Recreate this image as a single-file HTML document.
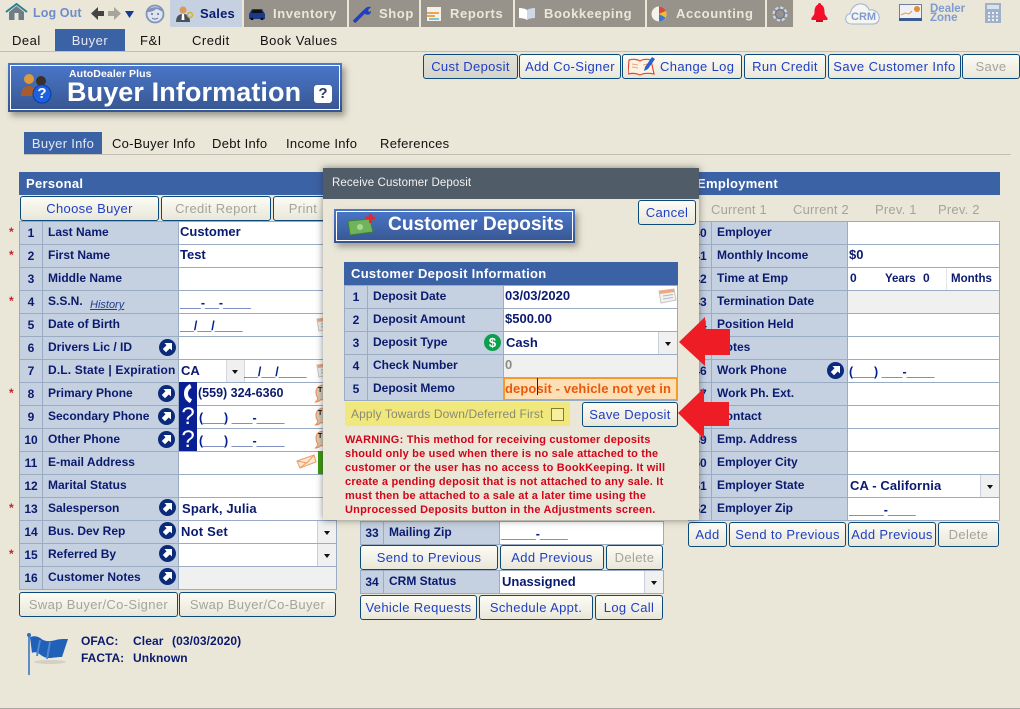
<!DOCTYPE html>
<html><head><meta charset="utf-8"><title>Buyer Information</title>
<style>
html,body{margin:0;padding:0}
body{width:1020px;height:709px;overflow:hidden;background:#eae7d8;position:relative;font-family:"Liberation Sans",sans-serif;color:#0a1a6e}
.a{position:absolute;white-space:nowrap}
.t{position:absolute;top:0;height:27px;background:#97938a;color:#ece8d9;font:bold 13px/27px "Liberation Sans",sans-serif;letter-spacing:.6px;white-space:nowrap}
.t span{position:absolute;top:0}
.s{position:absolute;top:29px;height:22px;font:13px/23px "Liberation Sans",sans-serif;letter-spacing:.5px;color:#111;white-space:nowrap}
.b{position:absolute;box-sizing:border-box;height:25px;border:1px solid #0c4a7c;border-radius:3px;background:linear-gradient(#fdfcf5,#e9e7d9);color:#1f3fc4;font:13px/23px "Liberation Sans",sans-serif;letter-spacing:.35px;text-align:center;white-space:nowrap;overflow:hidden}
.b.d{color:#a5a49b}
.p{position:absolute;box-sizing:border-box;border-left:1px solid #9aabc4;border-right:1px solid #9aabc4;border-bottom:1px solid #9aabc4}
.r{display:flex;height:23px;box-sizing:border-box;border-top:1px solid #9aabc4;background:#fff}
.n{width:23px;box-sizing:border-box;background:#c5d0e0;border-right:1px solid #9aabc4;font:bold 12px/22px "Liberation Sans",sans-serif;text-align:center;flex:none}
.l{width:136px;box-sizing:border-box;background:#c5d0e0;border-right:1px solid #9aabc4;font:bold 12px/20px "Liberation Sans",sans-serif;padding-left:5px;flex:none;white-space:nowrap;position:relative}
.v{flex:1;font:bold 13px/20px "Liberation Sans",sans-serif;padding-left:1px;white-space:nowrap;position:relative;overflow:hidden}
.v.g{background:#f0f0f0}
.m{color:#00228a;font:bold 12.5px/24px "Liberation Sans",sans-serif;padding-left:1px}
.dd{position:absolute;right:0;top:0;bottom:0;width:18px;background:#f0f0f0;border-left:1px solid #c9d0dc}
.dd:after{content:"";position:absolute;left:6px;top:10px;border:3px solid transparent;border-top:4px solid #111;border-bottom:0}
.h{position:absolute;background:#3c62a6;color:#fff;font:bold 13px/23px "Liberation Sans",sans-serif;letter-spacing:.3px;white-space:nowrap;overflow:hidden}
.ic{position:absolute;width:17px;height:17px}
.st{position:absolute;left:9px;color:#c8202a;font:bold 12px/12px "Liberation Sans",sans-serif}
.q{position:absolute;left:179px;width:18px;height:23px;background:#0a1f94;color:#fff;font:24px/24px "Liberation Sans",sans-serif;text-align:center;overflow:hidden}
.tk{position:absolute;left:314px;width:10px;height:20px}
.tl{position:absolute;left:318px;color:#111;font:bold 7px/8px "Liberation Sans",sans-serif}
.ct{position:absolute;top:202px;color:#a5a49b;font:13px/16px "Liberation Sans",sans-serif;letter-spacing:.2px}
</style></head><body>
<svg width="0" height="0" style="position:absolute"><defs>
<symbol id="go" viewBox="0 0 17 17"><circle cx="8.500" cy="8.500" r="8.500" fill="#0b2a7a"/><path d="M5.500 4h7.500v7.500l-2.200-2-3.800 3.700-3.200-3.200 3.700-3.800z" fill="#fff"/></symbol>
<symbol id="bub" viewBox="0 0 10 20"><path d="M10 1C5 1 2 4 2 8c0 3 1 5 2 6-.5 2-1.500 3-2.500 4 2 0 4-1 5.500-2.500 1 .3 2 .5 3 .5z" fill="#d8ccb8" stroke="#f08a50"/></symbol>
<symbol id="cal" viewBox="0 0 20 16"><path d="M2 3l15-2 2 11-15 3z" fill="#f4f2ee" stroke="#c9c5bd"/><path d="M2 3l15-2 .5 3L3 6z" fill="#eea87c"/><path d="M6 8l10-1.500M6 11l10-1.500" stroke="#a9b8d0"/></symbol>
</defs></svg>

<!-- top nav -->
<svg class="a" style="left:5px;top:3px" width="23" height="18" viewBox="0 0 23 18"><path d="M1 9L11.500 1 22 9" fill="none" stroke="#2d7f96" stroke-width="2"/><path d="M4 9l7.500-6L19 9v8H4z" fill="#6f7d86"/><rect x="9.500" y="10" width="4" height="7" fill="#e9e6d8"/></svg>
<div class="a" style="left:33px;top:5px;color:#6f8bc9;font:bold 12.5px/16px 'Liberation Sans',sans-serif;letter-spacing:.1px">Log Out</div>
<svg class="a" style="left:90px;top:6px" width="45" height="15" viewBox="0 0 45 15"><path d="M1 7.500L8 1v4h6v5H8v4z" fill="#444"/><path d="M31 7.500L24 1v4h-6v5h6v4z" fill="#a7a59b"/><path d="M35 5h9l-4.500 7z" fill="#143a94"/></svg>
<svg class="a" style="left:144px;top:3px" width="22" height="21" viewBox="0 0 22 21"><circle cx="11" cy="11" r="8.500" fill="#dfe4ee" stroke="#7f93bd" stroke-width="1.800"/><path d="M3 9c2-6 14-7 16 0-4-2-5-3-7-3-2 2-5 3-9 3z" fill="#7f93bd"/><circle cx="8" cy="11" r="1" fill="#5c6f99"/><circle cx="14" cy="11" r="1" fill="#5c6f99"/><path d="M8 15c2 1.500 4 1.500 6 0" stroke="#5c6f99" fill="none"/></svg>
<div class="t" style="left:170px;width:72px;background:#c5d0e0;color:#0a1a6e"><span style="left:30px;letter-spacing:.2px">Sales</span>
<svg style="position:absolute;left:4px;top:4px" width="20" height="20" viewBox="0 0 20 20"><circle cx="9" cy="6" r="3.500" fill="#d9995a"/><path d="M2 18c0-6 3-8 7-8s7 2 7 8z" fill="#46525e"/><path d="M8 10h2l.5 6h-3z" fill="#fff"/><circle cx="16" cy="11" r="2.500" fill="none" stroke="#d8b02c" stroke-width="1.500"/></svg></div>
<div class="t" style="left:244px;width:103px"><span style="left:29px">Inventory</span>
<svg style="position:absolute;left:4px;top:7px" width="18" height="13" viewBox="0 0 18 13"><path d="M1 7l3-5h10l3 5v5H1z" fill="#1a3a8c"/><path d="M5 3h8l2 3H3z" fill="#111"/><circle cx="4" cy="12" r="1.500" fill="#111"/><circle cx="14" cy="12" r="1.500" fill="#111"/></svg></div>
<div class="t" style="left:349px;width:70px"><span style="left:30px">Shop</span>
<svg style="position:absolute;left:4px;top:5px" width="19" height="18" viewBox="0 0 19 18"><path d="M1 17L12 6" stroke="#1f3fc4" stroke-width="3.500"/><path d="M11 8c-1-4 3-7 7-6l-3 3 1 2 2-1c0 4-4 5-7 2z" fill="#1f3fc4"/></svg></div>
<div class="t" style="left:421px;width:92px"><span style="left:29px">Reports</span>
<svg style="position:absolute;left:6px;top:7px" width="14" height="14" viewBox="0 0 14 14"><rect width="14" height="14" fill="#f3f1ea"/><rect y="5" width="12" height="2" fill="#eda54a"/><rect y="8" width="8" height="2" fill="#eda54a"/><rect x="2" y="11" width="10" height="2" fill="#7fc6d0"/></svg></div>
<div class="t" style="left:515px;width:130px"><span style="left:29px">Bookkeeping</span>
<svg style="position:absolute;left:4px;top:7px" width="16" height="13" viewBox="0 0 16 13"><path d="M0 1c3 0 6 .5 8 2v10C6 11.500 3 11 0 11z" fill="#fff"/><path d="M16 1c-3 0-6 .5-8 2v10c2-1.500 5-2 8-2z" fill="#cfd8e4"/></svg></div>
<div class="t" style="left:647px;width:118px"><span style="left:29px">Accounting</span>
<svg style="position:absolute;left:4px;top:6px" width="16" height="16" viewBox="0 0 16 16"><circle cx="8" cy="8" r="7.500" fill="#f4f2ec"/><path d="M8 8V.5A7.500 7.500 0 0 1 15 5z" fill="#d84a3a"/><path d="M8 8l7-3a7.500 7.500 0 0 1-.5 6.500z" fill="#eebc2d"/><path d="M8 8l6.500 3.500A7.500 7.500 0 0 1 8 15.500z" fill="#3e78c8"/></svg></div>
<div class="t" style="left:767px;width:26px"><svg style="position:absolute;left:4px;top:5px" width="18" height="18" viewBox="0 0 18 18"><circle cx="9" cy="9" r="6" fill="none" stroke="#cdd6e6" stroke-width="3" stroke-dasharray="3 1.700"/><circle cx="9" cy="9" r="4.500" fill="none" stroke="#6f7c96" stroke-width="1.500"/></svg></div>
<svg class="a" style="left:811px;top:3px" width="17" height="19" viewBox="0 0 17 19"><path d="M8.500 0c1 0 1.500 .7 1.500 1.500C13 3 13.500 6 13.500 9c0 3 1.500 4 3 6v2H.5v-2c1.500-2 3-3 3-6 0-3 .5-6 3.500-7.500C7 .7 7.500 0 8.500 0z" fill="#f2102a"/><rect x="5" y="17" width="7" height="2" fill="#c80c20"/></svg>
<svg class="a" style="left:845px;top:2px" width="36" height="23" viewBox="0 0 36 23"><path d="M7 22C2 22 0 19 1 15c.5-2 2-3 4-3 1-6 6-11 12-10 4 .5 6 3 7 6 5-1 9 2 10 6 1 5-2 8-6 8z" fill="#f6f5ef" stroke="#9db2d8" stroke-width="1"/></svg>
<div class="a" style="left:851px;top:11px;color:#7f9bcf;font:bold 11px/13px 'Liberation Sans',sans-serif">CRM</div>
<svg class="a" style="left:899px;top:4px" width="23" height="17" viewBox="0 0 23 17"><rect x=".5" y=".5" width="22" height="16" fill="#eef0f4" stroke="#6d7f9c"/><rect y="14" width="23" height="3" fill="#3a5a92"/><path d="M2 11l4-2 4 1 3-3" stroke="#e7974b" fill="none"/><circle cx="18" cy="5" r="3" fill="#e78a32"/></svg>
<div class="a" style="left:930px;top:5px;color:#7f9bcf;font:bold 11.5px/9px 'Liberation Sans',sans-serif">Dealer<br>Zone</div>
<svg class="a" style="left:985px;top:3px" width="16" height="20" viewBox="0 0 16 20"><rect width="16" height="20" fill="#9fb0c8"/><rect x="2" y="2" width="12" height="4" fill="#d8e2ee"/><path d="M3 9h2v2H3zM7 9h2v2H7zM11 9h2v2h-2zM3 12.500h2v2H3zM7 12.500h2v2H7zM11 12.500h2v2h-2zM3 16h2v2H3zM7 16h2v2H7zM11 16h2v2h-2z" fill="#eef0f4"/></svg>

<!-- sub nav -->
<div class="s" style="left:12px">Deal</div>
<div class="s" style="left:55px;width:70px;background:#3c62a6;color:#e4e8f0;text-align:center">Buyer</div>
<div class="s" style="left:140px">F&amp;I</div>
<div class="s" style="left:192px">Credit</div>
<div class="s" style="left:260px">Book Values</div>
<div class="a" style="left:0;top:51px;width:1020px;height:1px;background:#c2c0b5"></div>

<!-- top buttons -->
<div class="b" style="left:423px;top:54px;width:95px;background:linear-gradient(#e2e1d8,#d6d5ca)">Cust Deposit</div>
<div class="b" style="left:519px;top:54px;width:102px">Add Co-Signer</div>
<div class="b" style="left:622px;top:54px;width:120px;padding-left:37px;text-align:left">Change Log
<svg style="position:absolute;left:5px;top:1px" width="28" height="21" viewBox="0 0 28 21"><path d="M1 4c4-1 8-1 11 1 3-2 7-2 11-1l3 14c-5-1-10-1-14 1-4-2-8-2-12-1z" fill="#fbf3e2" stroke="#e0492f" stroke-width="1.200"/><path d="M4 8l6 1M4 11l6 1M15 9l5-1" stroke="#eaa38c"/><path d="M16 15l1-4L24 1l3 2-7 10z" fill="#2a5fd0"/></svg></div>
<div class="b" style="left:744px;top:54px;width:82px">Run Credit</div>
<div class="b" style="left:828px;top:54px;width:133px;letter-spacing:.42px">Save Customer Info</div>
<div class="b d" style="left:962px;top:54px;width:58px">Save</div>

<!-- banner -->
<div class="a" style="left:8px;top:63px;width:334px;height:49px;background:linear-gradient(#4a78cc,#37558f);box-shadow:3px 4px 6px rgba(90,90,80,.55)"><div style="position:absolute;left:2px;top:2px;right:2px;bottom:2px;border:1px solid #fff"></div></div>
<svg class="a" style="left:21px;top:72px" width="32" height="32" viewBox="0 0 32 32"><circle cx="8" cy="7" r="5" fill="#dc9a3c"/><circle cx="20" cy="9" r="5" fill="#3a3028"/><path d="M0 24c0-8 4-10 8-10s8 3 8 10z" fill="#a65c2c"/><circle cx="21" cy="22" r="9" fill="#1c62e0"/><circle cx="21" cy="22" r="9" fill="none" stroke="#0e3b9a"/></svg>
<div class="a" style="left:32px;top:86px;width:20px;text-align:center;color:#fff;font:bold 15px/16px 'Liberation Sans',sans-serif">?</div>
<div class="a" style="left:69px;top:68px;color:#fff;font:bold 10.500px/12px 'Liberation Sans',sans-serif;letter-spacing:.1px">AutoDealer Plus</div>
<div class="a" style="left:67px;top:76px;color:#fff;font:bold 27px/32px 'Liberation Sans',sans-serif;letter-spacing:.1px">Buyer Information</div>
<div class="a" style="left:314px;top:85px;width:18px;height:18px;background:#fff;border-radius:3px;color:#2d3c5c;font:bold 15px/18px 'Liberation Sans',sans-serif;text-align:center">?</div>

<!-- tabs -->
<div class="s" style="left:24px;top:132px;width:78px;background:#3c62a6;color:#e4e8f0;text-align:center;letter-spacing:.3px">Buyer Info</div>
<div class="s" style="left:112px;top:132px;letter-spacing:.25px">Co-Buyer Info</div>
<div class="s" style="left:212px;top:132px;letter-spacing:.3px">Debt Info</div>
<div class="s" style="left:286px;top:132px;letter-spacing:.3px">Income Info</div>
<div class="s" style="left:380px;top:132px;letter-spacing:.3px">References</div>
<div class="a" style="left:24px;top:154px;width:987px;height:1px;background:#c2c0b5"></div>

<!-- personal -->
<div class="h" style="left:19px;top:172px;width:320px;padding-left:7px;box-sizing:border-box">Personal</div>
<div class="b" style="left:20px;top:196px;width:139px">Choose Buyer</div>
<div class="b d" style="left:161px;top:196px;width:110px">Credit Report</div>
<div class="b d" style="left:273px;top:196px;width:60px">Print</div>
<div class="st" style="top:226px">*</div><div class="st" style="top:249px">*</div><div class="st" style="top:295px">*</div><div class="st" style="top:387px">*</div><div class="st" style="top:502px">*</div><div class="st" style="top:548px">*</div>

<div class="p" style="left:19px;top:221px;width:318px">
<div class="r"><div class="n">1</div><div class="l">Last Name</div><div class="v">Customer</div></div>
<div class="r"><div class="n">2</div><div class="l">First Name</div><div class="v">Test</div></div>
<div class="r"><div class="n">3</div><div class="l">Middle Name</div><div class="v"></div></div>
<div class="r"><div class="n">4</div><div class="l">S.S.N. <i style="position:absolute;left:47px;top:7px;font:italic 11px/14px 'Liberation Sans',sans-serif;text-decoration:underline;color:#23408c">History</i></div><div class="v m">___-__-____</div></div>
<div class="r"><div class="n">5</div><div class="l">Date of Birth</div><div class="v m">__/__/____</div></div>
<div class="r"><div class="n">6</div><div class="l">Drivers Lic / ID</div><div class="v"></div></div>
<div class="r"><div class="n">7</div><div class="l" style="letter-spacing:.15px">D.L. State | Expiration</div><div class="v"><span style="position:absolute;left:2px;top:1px">CA</span><div style="position:absolute;left:47px;top:0;bottom:0;width:17px;background:#f0f0f0;border-left:1px solid #d5d8de;border-right:1px solid #d5d8de"></div><div style="position:absolute;left:53px;top:10px;border:3px solid transparent;border-top:4px solid #111;border-bottom:0"></div><span class="m" style="position:absolute;left:65px;top:0;padding:0">__/__/____</span></div></div>
<div class="r"><div class="n">8</div><div class="l">Primary Phone</div><div class="v" style="padding-left:19px;font-size:12.500px;line-height:20px">(559) 324-6360</div></div>
<div class="r"><div class="n">9</div><div class="l">Secondary Phone</div><div class="v m" style="padding-left:20px">(___) ___-____</div></div>
<div class="r"><div class="n">10</div><div class="l">Other Phone</div><div class="v m" style="padding-left:20px">(___) ___-____</div></div>
<div class="r"><div class="n">11</div><div class="l">E-mail Address</div><div class="v"></div></div>
<div class="r"><div class="n">12</div><div class="l">Marital Status</div><div class="v"></div></div>
<div class="r"><div class="n">13</div><div class="l">Salesperson</div><div class="v" style="padding-left:3px;letter-spacing:.15px;line-height:22px">Spark, Julia</div></div>
<div class="r"><div class="n">14</div><div class="l">Bus. Dev Rep</div><div class="v" style="padding-left:2px;letter-spacing:.2px;line-height:22px">Not Set<div class="dd"></div></div></div>
<div class="r"><div class="n">15</div><div class="l">Referred By</div><div class="v"><div class="dd"></div></div></div>
<div class="r"><div class="n">16</div><div class="l">Customer Notes</div><div class="v g"></div></div>
</div>
<div class="q" style="top:382px"><svg width="18" height="23" viewBox="0 0 18 23" style="position:absolute;left:0;top:0"><path d="M11 2c-4 2-6 5-6 9.500s2 7.500 6 9.500l2-3.500-2-1.500c-1.500-1-2-3-2-4.500s.5-3.500 2-4.500l1.500-1.500z" fill="#fff"/></svg></div>
<div class="q" style="top:405px">?</div><div class="q" style="top:428px">?</div>
<svg class="ic" style="left:159px;top:339px"><use href="#go"/></svg>
<svg class="ic" style="left:158px;top:385px"><use href="#go"/></svg>
<svg class="ic" style="left:158px;top:408px"><use href="#go"/></svg>
<svg class="ic" style="left:158px;top:431px"><use href="#go"/></svg>
<svg class="ic" style="left:159px;top:499px"><use href="#go"/></svg>
<svg class="ic" style="left:159px;top:522px"><use href="#go"/></svg>
<svg class="ic" style="left:159px;top:545px"><use href="#go"/></svg>
<svg class="ic" style="left:159px;top:568px"><use href="#go"/></svg>
<svg class="a" style="left:315px;top:316px" width="20" height="16"><use href="#cal"/></svg>
<svg class="a" style="left:315px;top:362px" width="20" height="16"><use href="#cal"/></svg>
<svg class="tk" style="top:384px"><use href="#bub"/></svg><div class="tl" style="top:387px">T</div>
<svg class="tk" style="top:407px"><use href="#bub"/></svg><div class="tl" style="top:410px">T</div>
<svg class="tk" style="top:430px"><use href="#bub"/></svg><div class="tl" style="top:433px">T</div>
<svg class="a" style="left:296px;top:454px" width="21" height="15" viewBox="0 0 21 15"><path d="M1 7L18 1l2 7L4 14z" fill="#fbe7d0" stroke="#ee9a63"/><path d="M1 7l10 2 7-8M4 14l6-5" fill="none" stroke="#ee9a63"/></svg>
<div class="a" style="left:318px;top:451px;width:7px;height:23px;background:#3f9a10"></div>
<div class="b d" style="left:19px;top:592px;width:159px">Swap Buyer/Co-Signer</div>
<div class="b d" style="left:179px;top:592px;width:157px">Swap Buyer/Co-Buyer</div>

<svg class="a" style="left:26px;top:632px" width="45" height="44" viewBox="0 0 45 44"><ellipse cx="24" cy="30" rx="16" ry="2" fill="#d4d1c2"/><path d="M3 3v40" stroke="#2e6fc0" stroke-width="1.500"/><circle cx="3" cy="3" r="2" fill="#2e6fc0"/><path d="M4 5c6-2 9 0 13 3 5 2 9 1 13 0 3-1 7-1 12-1-2 6-4 12-6 18-6 0-9 1-13 1-5 0-8-3-11-5-2-1-5-1-6 0z" fill="#2160b8"/><path d="M14 8l-3 16M24 10l-3 17" stroke="#4c88d6" stroke-width="2"/></svg>
<div class="a" style="left:81px;top:633px;font:bold 12px/17px 'Liberation Sans',sans-serif">OFAC:<br>FACTA:</div>
<div class="a" style="left:133px;top:633px;font:bold 12px/17px 'Liberation Sans',sans-serif;letter-spacing:.1px">Clear<span style="position:absolute;left:39px;top:0">(03/03/2020)</span><br>Unknown</div>
<div class="a" style="left:0;top:708px;width:1020px;height:1px;background:#a8a8a2"></div>

<!-- middle -->
<div class="h" style="left:360px;top:172px;width:304px"></div>
<div class="p" style="left:360px;top:521px;width:304px">
<div class="r"><div class="n">33</div><div class="l" style="width:116px">Mailing Zip</div><div class="v m">_____-____</div></div>
</div>
<div class="b" style="left:360px;top:545px;width:138px">Send to Previous</div>
<div class="b" style="left:500px;top:545px;width:104px">Add Previous</div>
<div class="b d" style="left:606px;top:545px;width:57px">Delete</div>
<div class="p" style="left:360px;top:570px;width:304px">
<div class="r"><div class="n">34</div><div class="l" style="width:116px">CRM Status</div><div class="v" style="padding-left:2px;line-height:22px">Unassigned<div class="dd"></div></div></div>
</div>
<div class="b" style="left:360px;top:595px;width:117px">Vehicle Requests</div>
<div class="b" style="left:479px;top:595px;width:114px">Schedule Appt.</div>
<div class="b" style="left:595px;top:595px;width:68px">Log Call</div>

<!-- employment -->
<div class="h" style="left:688px;top:172px;width:312px;padding-left:9px;box-sizing:border-box">Employment</div>
<div class="ct" style="left:711px">Current 1</div>
<div class="ct" style="left:793px">Current 2</div>
<div class="ct" style="left:875px">Prev. 1</div>
<div class="ct" style="left:938px">Prev. 2</div>
<div class="p" style="left:688px;top:221px;width:312px">
<div class="r"><div class="n">40</div><div class="l">Employer</div><div class="v"></div></div>
<div class="r"><div class="n">41</div><div class="l">Monthly Income</div><div class="v">$0</div></div>
<div class="r"><div class="n">42</div><div class="l">Time at Emp</div><div class="v"><span style="position:absolute;left:2px;top:0;font-size:12px">0</span><span style="position:absolute;left:37px;top:1px;font-size:11.500px">Years</span><span style="position:absolute;left:75px;top:0;font-size:12px">0</span><div style="position:absolute;left:98px;top:0;bottom:0;width:1px;background:#e4e4e4"></div><span style="position:absolute;left:103px;top:1px;font-size:11.500px">Months</span></div></div>
<div class="r"><div class="n">43</div><div class="l">Termination Date</div><div class="v g"></div></div>
<div class="r"><div class="n">44</div><div class="l">Position Held</div><div class="v"></div></div>
<div class="r"><div class="n">45</div><div class="l">Notes</div><div class="v"></div></div>
<div class="r"><div class="n">46</div><div class="l">Work Phone</div><div class="v m">(___) ___-____</div></div>
<div class="r"><div class="n">47</div><div class="l">Work Ph. Ext.</div><div class="v"></div></div>
<div class="r"><div class="n">48</div><div class="l">Contact</div><div class="v"></div></div>
<div class="r"><div class="n">49</div><div class="l">Emp. Address</div><div class="v"></div></div>
<div class="r"><div class="n">50</div><div class="l">Employer City</div><div class="v"></div></div>
<div class="r"><div class="n">51</div><div class="l">Employer State</div><div class="v" style="padding-left:2px;letter-spacing:.1px;line-height:22px">CA - California<div class="dd"></div></div></div>
<div class="r"><div class="n">52</div><div class="l">Employer Zip</div><div class="v m">_____-____</div></div>
</div>
<svg class="ic" style="left:827px;top:362px"><use href="#go"/></svg>
<div class="b" style="left:688px;top:522px;width:39px">Add</div>
<div class="b" style="left:729px;top:522px;width:117px">Send to Previous</div>
<div class="b" style="left:848px;top:522px;width:88px">Add Previous</div>
<div class="b d" style="left:938px;top:522px;width:61px">Delete</div>

<!-- dialog -->
<div class="a" style="left:323px;top:168px;width:376px;height:352px;background:#eae7d8;box-shadow:0 0 7px rgba(40,40,40,.55)"></div>
<div class="a" style="left:323px;top:168px;width:376px;height:31px;background:#515c69;color:#f2f2f2;font:11.500px/31px 'Liberation Sans',sans-serif;padding-left:9px;box-sizing:border-box;letter-spacing:.1px">Receive Customer Deposit</div>
<div class="b" style="left:638px;top:200px;width:58px">Cancel</div>
<div class="a" style="left:334px;top:209px;width:241px;height:34px;background:linear-gradient(#4a78cc,#37558f);box-shadow:3px 4px 6px rgba(90,90,80,.5)"><div style="position:absolute;left:2px;top:2px;right:2px;bottom:2px;border:1px solid #fff"></div></div>
<svg class="a" style="left:347px;top:214px" width="31" height="22" viewBox="0 0 31 22"><path d="M1 7l22-2 3 13-23 3z" fill="#6fb35a" stroke="#3e7f3a"/><circle cx="13" cy="13" r="3" fill="#a8d88e"/><path d="M19 4h9M23.500 0v9" stroke="#e8262a" stroke-width="3"/></svg>
<div class="a" style="left:388px;top:212px;color:#fff;font:bold 19.200px/26px 'Liberation Sans',sans-serif">Customer Deposits</div>
<div class="h" style="left:344px;top:262px;width:334px;padding-left:7px;box-sizing:border-box">Customer Deposit Information</div>
<div class="p" style="left:344px;top:285px;width:334px">
<div class="r"><div class="n">1</div><div class="l">Deposit Date</div><div class="v">03/03/2020</div></div>
<div class="r"><div class="n">2</div><div class="l">Deposit Amount</div><div class="v">$500.00</div></div>
<div class="r"><div class="n">3</div><div class="l">Deposit Type</div><div class="v" style="padding-left:2px;line-height:22px">Cash<div class="dd"></div></div></div>
<div class="r"><div class="n">4</div><div class="l">Check Number</div><div class="v g" style="color:#8a8a8a">0</div></div>
<div class="r"><div class="n">5</div><div class="l">Deposit Memo</div><div class="v" style="background:#fddfb6;box-shadow:inset 0 0 0 1px #f59a2c;color:#e8590c;letter-spacing:.1px;line-height:21px;padding-left:1px">deposit - vehicle not yet in</div></div>
</div>
<div class="a" style="left:537px;top:378px;width:1px;height:17px;background:#222"></div>
<svg class="a" style="left:657px;top:288px" width="20" height="16"><use href="#cal"/></svg>
<div class="a" style="left:484px;top:334px;width:17px;height:17px;border-radius:9px;background:#0ba04c;color:#fff;font:bold 13px/17px 'Liberation Sans',sans-serif;text-align:center">$</div>
<div class="a" style="left:345px;top:402px;width:225px;height:24px;background:#f0e87c;color:#8a8a72;font:12px/24px 'Liberation Sans',sans-serif;padding-left:6px;box-sizing:border-box;letter-spacing:.12px">Apply Towards Down/Deferred First</div>
<div class="a" style="left:551px;top:408px;width:13px;height:13px;box-sizing:border-box;background:#f6ef9e;border:1px solid #8a7a2c"></div>
<div class="b" style="left:582px;top:402px;width:96px">Save Deposit</div>
<div class="a" style="left:345px;top:433px;width:340px;color:#d2051a;font:bold 11px/14px 'Liberation Sans',sans-serif;letter-spacing:.2px"><span>WARNING:</span> This method for receiving customer deposits<br>should only be used when there is no sale attached to the<br>customer or the user has no access to BookKeeping. It will<br>create a pending deposit that is not attached to any sale. It<br>must then be attached to a sale at a later time using the<br>Unprocessed Deposits button in the Adjustments screen.</div>

<!-- arrows -->
<svg class="a" style="left:0;top:0;pointer-events:none" width="1020" height="709"><polygon points="679,342 705,317 705,329 730,329 730,355 705,355 705,366" fill="#ee1c25"/><polygon points="678,413 704,388 704,402 729,402 729,426 704,426 704,439" fill="#ee1c25"/></svg>
</body></html>
